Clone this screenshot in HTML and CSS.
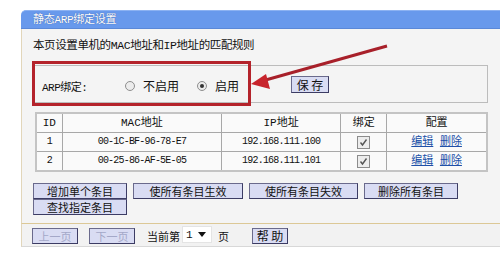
FILE: index.html
```html
<!DOCTYPE html>
<html lang="zh-CN">
<head>
  <meta charset="UTF-8">
  <meta name="viewport" content="width=device-width, initial-scale=1.0">
  <title>静态ARP绑定设置</title>
  <link rel="stylesheet" href="styles.css">
</head>
<body>
  <div class="panel">
    <div class="panel-head">静态ARP绑定设置</div>

    <div class="panel-body">
      <p class="desc">本页设置单机的MAC地址和IP地址的匹配规则</p>

      <!-- ARP binding on / off -->
      <div class="arp-box">
        <span class="arp-label">ARP绑定:</span>
        <span class="radio"><i class="dot"></i>不启用</span>
        <span class="radio radio-on"><i class="dot checked"></i>启用</span>
        <button class="btn btn-save">保 存</button>
      </div>

      <!-- Binding list -->
      <table class="arp-table">
        <tr>
          <th class="c-id">ID</th>
          <th class="c-mac">MAC地址</th>
          <th class="c-ip">IP地址</th>
          <th class="c-bind">绑定</th>
          <th class="c-cfg">配置</th>
        </tr>
        <tr>
          <td class="mono">1</td>
          <td class="mono">00-1C-BF-96-78-E7</td>
          <td class="mono">192.168.111.100</td>
          <td><span class="check"><svg viewBox="0 0 11 11" width="11" height="11"><path d="M2.5 5.5 L4.5 8 L8.5 2.5" fill="none" stroke="#555" stroke-width="1.4"/></svg></span></td>
          <td><a href="#">编辑</a> <a href="#">删除</a></td>
        </tr>
        <tr>
          <td class="mono">2</td>
          <td class="mono">00-25-86-AF-5E-05</td>
          <td class="mono">192.168.111.101</td>
          <td><span class="check"><svg viewBox="0 0 11 11" width="11" height="11"><path d="M2.5 5.5 L4.5 8 L8.5 2.5" fill="none" stroke="#555" stroke-width="1.4"/></svg></span></td>
          <td><a href="#">编辑</a> <a href="#">删除</a></td>
        </tr>
      </table>

      <!-- Bulk actions -->
      <div class="actions">
        <button class="btn w-94">增加单个条目</button>
        <button class="btn w-110">使所有条目生效</button>
        <button class="btn w-109">使所有条目失效</button>
        <button class="btn w-94">删除所有条目</button>
        <button class="btn w-94">查找指定条目</button>
      </div>
    </div>

    <!-- Paging -->
    <div class="panel-foot">
      <button class="btn btn-page" disabled>上一页</button>
      <button class="btn btn-page next" disabled>下一页</button>
      <span class="page-text">当前第</span>
      <span class="select">1<svg viewBox="0 0 8 5" width="8" height="5"><path d="M0 0 H8 L4 5 Z" fill="#111"/></svg></span>
      <span class="page-unit">页</span>
      <button class="btn btn-help">帮 助</button>
    </div>
  </div>

  <!-- red annotation drawn over the screenshot -->
  <div class="mark-box"></div>
  <svg class="mark-arrow" viewBox="0 0 500 255" width="500" height="255">
    <line x1="387" y1="46" x2="262" y2="81" stroke="#a8202a" stroke-width="3"/>
    <polygon points="251,84 266,74 270,89" fill="#c8242c"/>
  </svg>
</body>
</html>
```

FILE: styles.css
```css
html, body {
  overflow: hidden;
}
body {
  margin: 0;
  background: #fff;
  font-family: "Liberation Mono", "Noto Sans CJK SC", monospace;
  font-size: 11px;
  color: #111;
  width: 500px;
  height: 255px;
  position: relative;
}
.panel {
  margin: 10px 0 0 21px;
  width: 479px;
}
.panel-head {
  height: 19px;
  line-height: 19px;
  padding-left: 12px;
  background: #6899ec;
  border-top: 1px solid #8cb2f2;
  border-bottom: 1px solid #5a88d8;
  border-radius: 5px 0 0 0;
  box-sizing: border-box;
  color: #fff;
  text-shadow: 0 0 1px #2c4f90;
  letter-spacing: -0.3px;
}
.panel-body {
  background: #f4f4f4;
  border-left: 1px solid #e2d6ba;
  padding: 9px 0 8px 11px;
}
.desc {
  margin: 0;
  line-height: 16px;
  font-size: 11.5px;
  letter-spacing: -0.4px;
}

.arp-box {
  margin-top: 11px;
  width: 455px;
  height: 38px;
  box-sizing: border-box;
  border: 1px solid #bcbcbc;
  display: flex;
  align-items: center;
  padding: 3px 0 0 8px;
}
.arp-label {
  width: 83px;
  letter-spacing: -0.5px;
}
.radio {
  width: 72px;
  display: flex;
  align-items: center;
  font-size: 12px;
}
.radio-on {
  width: 94px;
}
.dot {
  width: 10px;
  height: 10px;
  box-sizing: border-box;
  border: 1px solid #8e8e8e;
  border-radius: 50%;
  background: #ececec;
  margin-right: 8px;
  position: relative;
}
.dot.checked::after {
  content: "";
  position: absolute;
  left: 2px;
  top: 2px;
  width: 4px;
  height: 4px;
  border-radius: 50%;
  background: #333;
}

.btn {
  font-family: "Noto Sans CJK SC", sans-serif;
  font-size: 11px;
  line-height: 14px;
  height: 16px;
  padding: 0;
  margin: 0;
  background: #d9dcf3;
  border: 1px solid #3c3c64;
  border-top-color: #6a6a8c;
  border-left-color: #6a6a8c;
  color: #111;
  box-sizing: border-box;
}
.btn-save {
  width: 38px;
  height: 17px;
  font-size: 12px;
  margin-top: -2px;
}

.arp-table {
  margin: 9px 0 0 2px;
  width: 453px;
  border-collapse: collapse;
  background: #fafafa;
  border: 2px solid #c4c4c4;
}
.arp-table th,
.arp-table td {
  border: 1px solid #a8a8a8;
  height: 18px;
  padding: 0;
  text-align: center;
  font-weight: normal;
  line-height: 16px;
}
.c-id { width: 25px; }
.c-mac { width: 162px; }
.c-ip { width: 119px; }
.c-bind { width: 46px; }
.c-cfg { width: 101px; }
.mono {
  font-size: 10px;
  letter-spacing: -0.8px;
}
.check {
  display: inline-block;
  width: 11px;
  height: 11px;
  border: 1px solid #8c8c8c;
  background: #ededed;
  vertical-align: middle;
  line-height: 0;
}
.arp-table a {
  color: #2050a8;
  text-decoration: underline;
}

.actions {
  margin-top: 11px;
  width: 440px;
  display: flex;
  flex-wrap: wrap;
  column-gap: 6px;
}
.w-94 { width: 94px; }
.w-109 { width: 109px; }
.w-110 { width: 110px; }

.panel-foot {
  height: 24px;
  box-sizing: border-box;
  background: #f2f2f2;
  border-left: 1px solid #e2d6ba;
  border-top: 1px solid #dcc896;
  border-bottom: 1px solid #d8d8d8;
  padding: 4px 0 0 10px;
  display: flex;
  align-items: flex-start;
  font-family: "Noto Sans CJK SC", sans-serif;
  font-size: 11px;
  line-height: 16px;
}
.btn-page {
  width: 46px;
  color: #a4a8c8;
}
.btn-page.next {
  margin-left: 11px;
}
.page-text {
  margin-left: 12px;
}
.select {
  margin: -2px 0 0 2px;
  width: 30px;
  height: 17px;
  box-sizing: border-box;
  background: #fff;
  border: 1px solid #e4e4e4;
  display: flex;
  align-items: center;
  justify-content: space-between;
  padding: 0 5px 0 3px;
  font-family: "Liberation Mono", monospace;
}
.page-unit {
  margin-left: 6px;
}
.btn-help {
  width: 36px;
  margin-left: 23px;
  font-size: 12px;
}

/* annotation overlays */
.mark-box {
  position: absolute;
  left: 32px;
  top: 61px;
  width: 219px;
  height: 45px;
  box-sizing: border-box;
  border: 3px solid #b4232b;
}
.mark-arrow {
  position: absolute;
  left: 0;
  top: 0;
}
```
